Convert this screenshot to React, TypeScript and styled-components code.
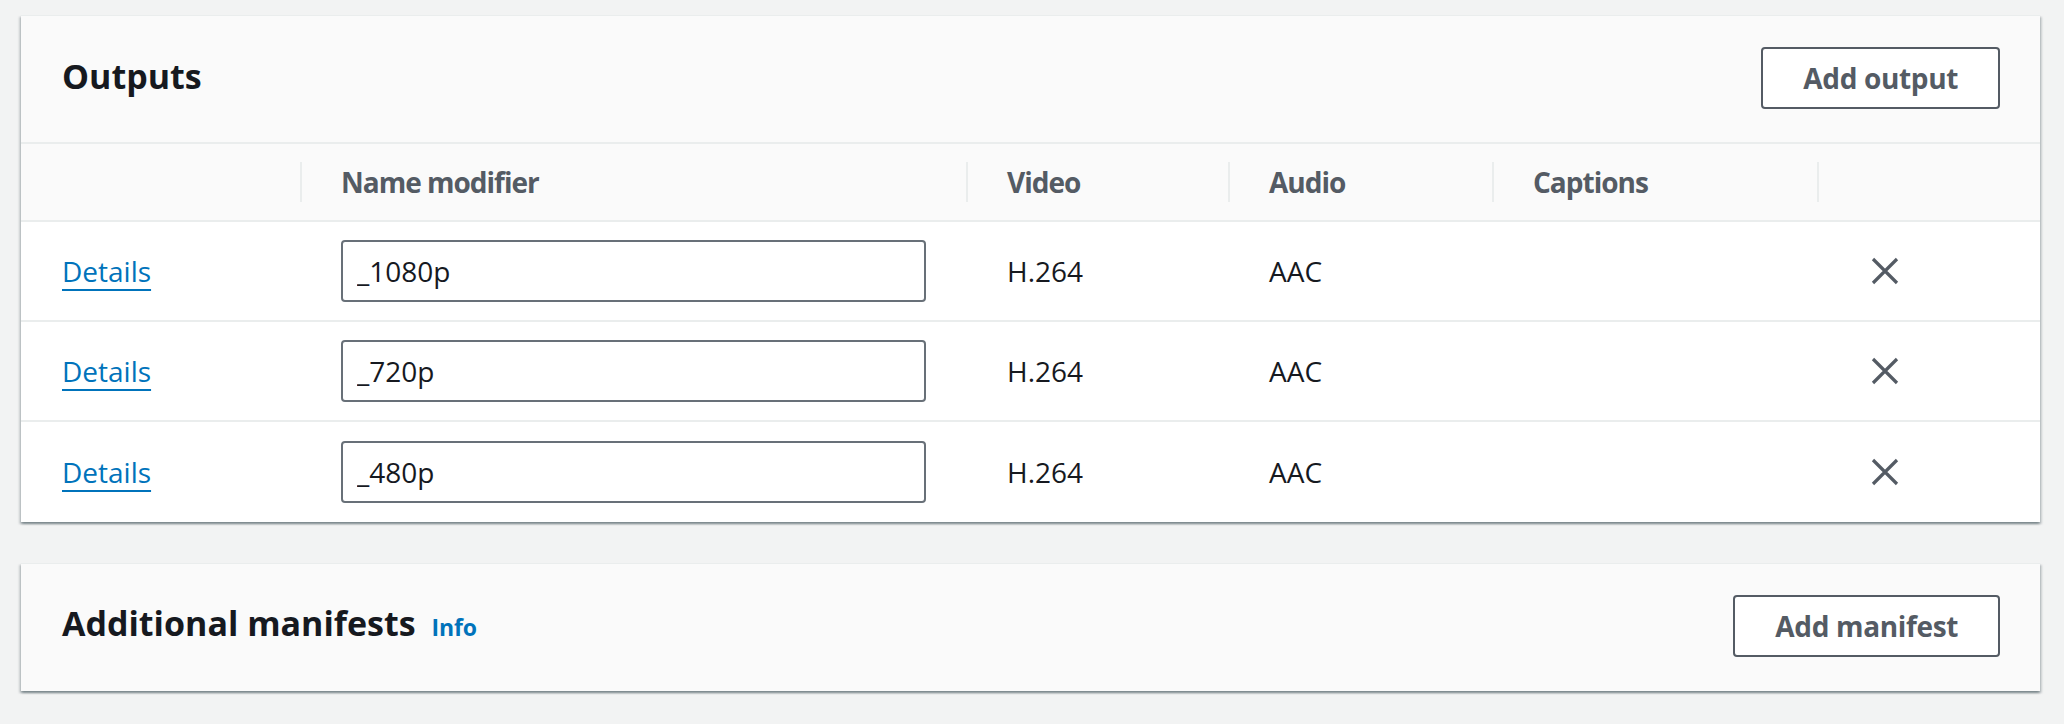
import React from "react";
import styled, { createGlobalStyle } from "styled-components";

const GlobalStyle = createGlobalStyle`
  html, body {
    margin: 0;
    padding: 0;
    background: #f2f3f3;
  }
  body {
    font-family: "Open Sans", "Noto Sans", sans-serif;
    color: #16191f;
  }
  * { box-sizing: border-box; }
`;

const Page = styled.div`
  display: flex;
  flex-direction: column;
  gap: 41px;
  padding: 15px 24px 32px 21px;
  min-height: 724px;
`;

const Container = styled.section`
  background: #ffffff;
  border-top: 1px solid #eaeded;
  box-shadow: 0 2px 2px 0 rgba(0, 28, 36, 0.3),
    2px 2px 2px 0 rgba(0, 28, 36, 0.15),
    -2px 2px 2px 0 rgba(0, 28, 36, 0.15);
`;

const Header = styled.header<{
  $height: number;
  $padBottom: number;
  $divider?: boolean;
}>`
  display: flex;
  align-items: center;
  justify-content: space-between;
  height: ${(p) => p.$height}px;
  padding: 0 40px ${(p) => p.$padBottom}px 41px;
  background: #fafafa;
  border-bottom: ${(p) => (p.$divider ? "2px solid #eaeded" : "none")};
`;

const TitleGroup = styled.div`
  display: flex;
  align-items: baseline;
  gap: 16px;
  margin-bottom: 5px;
`;

const Title = styled.h2`
  margin: 0;
  font-size: 34px;
  line-height: 44px;
  font-weight: 700;
  letter-spacing: 0;
  color: #16191f;
`;

const InfoLink = styled.a`
  font-size: 23px;
  font-weight: 700;
  letter-spacing: -0.2px;
  color: #0073bb;
  text-decoration: none;
  cursor: pointer;
`;

const Button = styled.button`
  height: 62px;
  padding: 0 40px;
  background: #ffffff;
  border: 2px solid #545b64;
  border-radius: 4px;
  font-family: "Open Sans", "Noto Sans", sans-serif;
  font-size: 28px;
  font-weight: 700;
  letter-spacing: -0.35px;
  color: #545b64;
  cursor: pointer;
`;

const COLS = "279px 666px 262px 264px 325px 1fr";

const HeadRow = styled.div`
  display: grid;
  grid-template-columns: ${COLS};
  height: 78px;
  background: #fafafa;
  border-bottom: 2px solid #eaeded;
`;

const HeadCell = styled.div`
  display: flex;
  align-items: center;
`;

const Divider = styled.span`
  width: 2px;
  height: 40px;
  background: #eaeded;
  margin-right: 39px;
`;

const HeadLabel = styled.span`
  font-size: 28px;
  font-weight: 700;
  letter-spacing: -1px;
  color: #545b64;
`;

const Row = styled.div<{ $last?: boolean }>`
  display: grid;
  grid-template-columns: ${COLS};
  height: 100px;
  border-bottom: ${(p) => (p.$last ? "none" : "2px solid #eaeded")};
`;

const Cell = styled.div`
  display: flex;
  align-items: center;
  padding-left: 41px;
  font-size: 28px;
  color: #16191f;
`;

const DetailsLink = styled.a`
  font-size: 28px;
  color: #0073bb;
  text-decoration: underline;
  text-decoration-thickness: 2px;
  text-underline-offset: 7px;
  cursor: pointer;
`;

const TextInput = styled.input`
  width: 585px;
  height: 62px;
  padding: 0 14px;
  border: 2px solid #687078;
  border-radius: 4px;
  font-family: "Open Sans", "Noto Sans", sans-serif;
  font-size: 28px;
  color: #16191f;
  background: #ffffff;
  outline: none;
`;

const IconButton = styled.button`
  display: flex;
  align-items: center;
  justify-content: center;
  padding: 0 0 0 12px;
  background: transparent;
  border: none;
  cursor: pointer;
`;

const CloseIcon = () => (
  <svg width="30" height="30" viewBox="0 0 30 30" fill="none">
    <path
      d="M3 3 L27 27 M27 3 L3 27"
      stroke="#545b64"
      strokeWidth="3.2"
      strokeLinecap="butt"
    />
  </svg>
);

const outputs = [
  { name: "_1080p", video: "H.264", audio: "AAC", captions: "" },
  { name: "_720p", video: "H.264", audio: "AAC", captions: "" },
  { name: "_480p", video: "H.264", audio: "AAC", captions: "" },
];

const headers = ["", "Name modifier", "Video", "Audio", "Captions", ""];

export default function App() {
  return (
    <>
      <GlobalStyle />
      <Page>
        <Container>
          <Header $height={128} $padBottom={2} $divider>
            <TitleGroup>
              <Title>Outputs</Title>
            </TitleGroup>
            <Button>Add output</Button>
          </Header>
          <HeadRow>
            {headers.map((h, i) => (
              <HeadCell key={i}>
                {i > 0 && <Divider />}
                {h && <HeadLabel>{h}</HeadLabel>}
              </HeadCell>
            ))}
          </HeadRow>
          {outputs.map((o, i) => (
            <Row key={o.name} $last={i === outputs.length - 1}>
              <Cell>
                <DetailsLink>Details</DetailsLink>
              </Cell>
              <Cell>
                <TextInput defaultValue={o.name} />
              </Cell>
              <Cell>{o.video}</Cell>
              <Cell>{o.audio}</Cell>
              <Cell>{o.captions}</Cell>
              <Cell>
                <IconButton aria-label="Remove output">
                  <CloseIcon />
                </IconButton>
              </Cell>
            </Row>
          ))}
        </Container>
        <Container>
          <Header $height={127} $padBottom={4}>
            <TitleGroup>
              <Title>Additional manifests</Title>
              <InfoLink>Info</InfoLink>
            </TitleGroup>
            <Button>Add manifest</Button>
          </Header>
        </Container>
      </Page>
    </>
  );
}
